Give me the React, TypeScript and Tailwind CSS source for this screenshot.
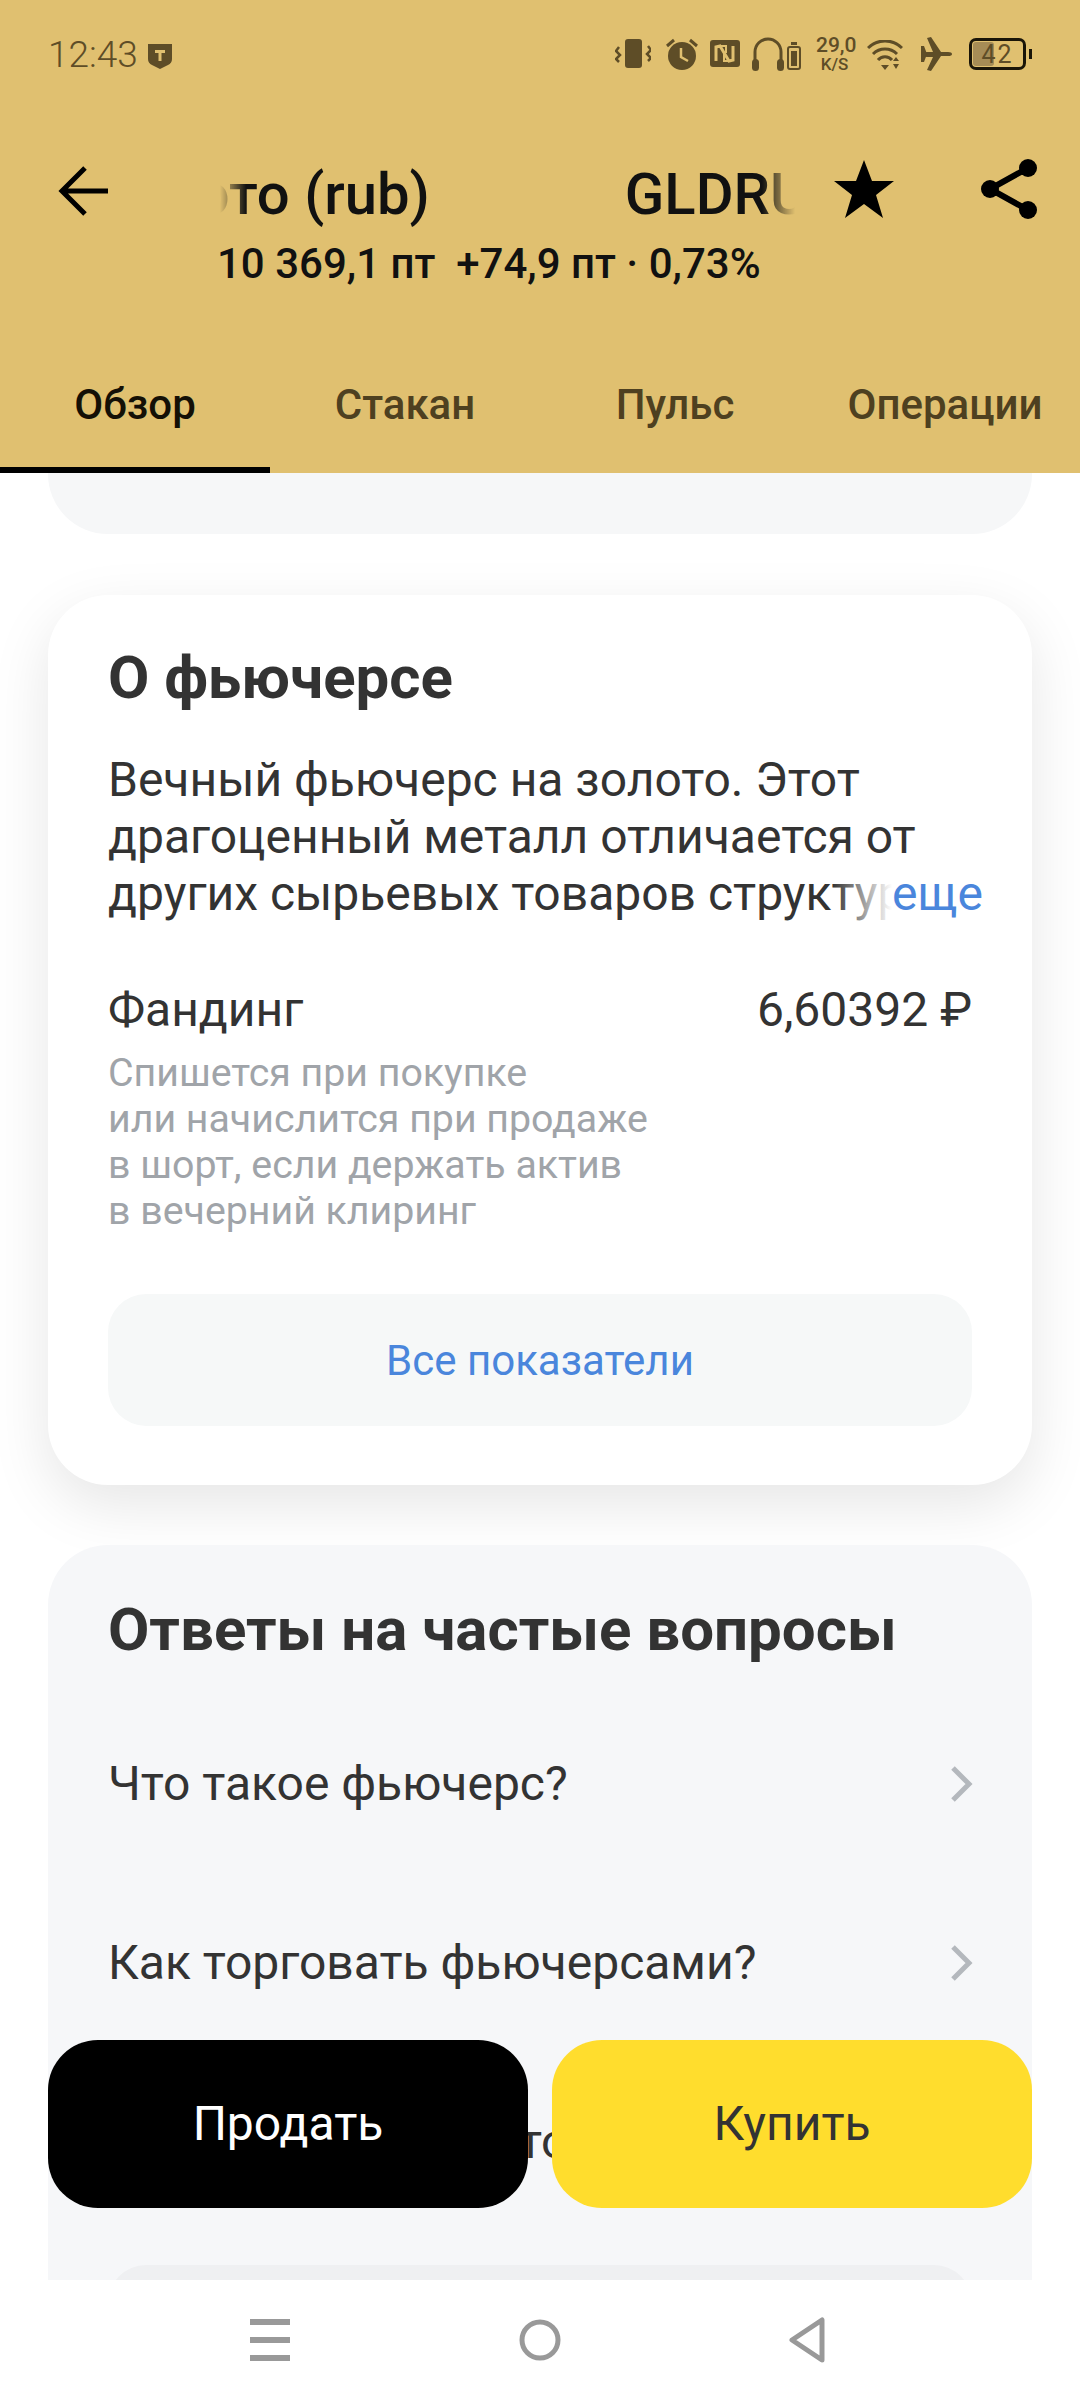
const tabs = ["Обзор", "Стакан", "Пульс", "Операции"];
const faq = ["Что такое фьючерс?", "Как торговать фьючерсами?", "Какие условия по торговле?"];
const funding = ["Спишется при покупке", "или начислится при продаже", "в шорт, если держать актив", "в вечерний клиринг"];

function StatusBar() {
  return (
    <div className="h-[100px] flex items-start pl-[48px] pr-[48px] text-[#5e4d27]">
      <span className="mt-[37px] text-[37px] leading-[36px] font-light">12:43</span>
      <svg className="mt-[43px] ml-[9px]" width="26" height="26" viewBox="0 0 26 26">
        <path d="M1 1h24v15q0 4-4 6l-8 4-8-4q-4-2-4-6z" fill="currentColor" />
        <path d="M8 7h10v3h-3.500v8h-3v-8H8z" fill="#e0c070" />
      </svg>
      <div className="ml-auto mt-[36px] flex items-start">
        <svg width="36" height="30" viewBox="0 0 36 30" className="mt-[3px]">
          <rect x="10" y="0" width="17" height="29" rx="3" fill="currentColor" />
          <path d="M4 8 1 12l4 4-4 4 3 3M33 7l3 4-4 4 4 4-3 3" fill="none" stroke="currentColor" strokeWidth="2.500" />
        </svg>
        <svg width="32" height="32" viewBox="0 0 32 32" className="ml-[15px] mt-[2px]">
          <circle cx="16" cy="18" r="14" fill="currentColor" />
          <path d="M15 10v9l7 4" fill="none" stroke="#e0c070" strokeWidth="2.500" />
          <path d="M1 8l7-6M31 8l-7-6" fill="none" stroke="currentColor" strokeWidth="3" />
        </svg>
        <svg width="30" height="28" viewBox="0 0 30 28" className="ml-[12px] mt-[4px]">
          <rect width="30" height="27" rx="3" fill="currentColor" />
          <path d="M6 21V7l4-1 9 15 4-1V6" fill="none" stroke="#e0c070" strokeWidth="3" />
          <path d="M11 6h5v7M19 21h-5v-7" fill="none" stroke="#e0c070" strokeWidth="2" />
        </svg>
        <svg width="32" height="34" viewBox="0 0 32 34" className="ml-[12px] mt-[1px]">
          <path d="M3 25V15a13 13 0 0 1 26 0v10" fill="none" stroke="currentColor" strokeWidth="3" />
          <rect x="0" y="22" width="7" height="12" rx="3.500" fill="currentColor" />
          <rect x="25" y="22" width="7" height="12" rx="3.500" fill="currentColor" />
        </svg>
        <svg width="14" height="28" viewBox="0 0 14 28" className="ml-[3px] mt-[6px]">
          <rect x="4" y="0" width="6" height="3" fill="currentColor" />
          <rect x="1" y="5" width="12" height="22" rx="2" fill="none" stroke="currentColor" strokeWidth="2" />
          <rect x="4" y="9" width="6" height="15" fill="currentColor" />
        </svg>
        <div className="ml-[15px] w-[37px] text-center font-medium">
          <div className="text-[21px] leading-[18px]">29,0</div>
          <div className="text-[17px] leading-[16px] mt-[2px]">K/S</div>
        </div>
        <svg width="36" height="30" viewBox="0 0 36 30" className="ml-[14px] mt-[4px]">
          <path d="M1 8a24 24 0 0 1 34 0M6 14a17 17 0 0 1 24 0M11 20a9 9 0 0 1 14 0" fill="none" stroke="currentColor" strokeWidth="3" />
          <path d="M14 25h8l-4 5zM26 21h6l-3-4zM26 24h6l-3 5z" fill="currentColor" />
        </svg>
        <svg width="32" height="34" viewBox="0 0 32 34" className="ml-[18px] mt-[1px]">
          <path d="M2 17q0-2 4-2h6L6 1l4-1 10 15h7q4 0 4 2t-4 2h-7L10 34l-4-1 6-13H6q-4 0-4-3z" fill="currentColor" />
          <path d="M0 9h3l3 8-3 8H0z" fill="currentColor" />
        </svg>
        <div className="ml-[16px] mt-[2px] flex items-center">
          <div className="relative w-[57px] h-[32px] rounded-[7px] border-[3px] border-[#1a1508] overflow-hidden">
            <div className="absolute left-[1px] top-[1px] bottom-[1px] w-[21px] rounded-[3px] bg-[#a68c56]" />
            <div className="absolute inset-0 flex items-center justify-center text-[25px] leading-none tracking-[2px]">42</div>
          </div>
          <div className="ml-[3px] w-[3px] h-[10px] bg-[#1a1508]" />
        </div>
      </div>
    </div>
  );
}

function Header() {
  return (
    <div className="bg-[#e0c070] h-[473px] shrink-0 flex flex-col">
      <StatusBar />
      <div className="h-[119px] mt-[56px] flex items-start relative">
        <svg width="52" height="52" viewBox="0 0 52 52" className="ml-[58px] mt-[9px]">
          <path d="M27 3 4 26l23 23M4 26h46" fill="none" stroke="#000" strokeWidth="5" />
        </svg>
        <div className="ml-[102px] w-[583px] overflow-hidden [mask-image:linear-gradient(to_right,transparent_8px,black_34px,black_550px,transparent)]">
          <div className="flex -ml-[116px] mt-[3px] text-[58px] leading-[70px] font-medium text-[#111] whitespace-nowrap">
            <span>Золото (rub)</span>
            <span className="ml-[195px]">GLDRUBF</span>
          </div>
        </div>
        <svg width="60" height="58" viewBox="0 0 60 58" className="absolute left-[834px] top-[4px]">
          <path d="M30 0l8 21h22L42 35l7 23-19-14-19 14 7-23L0 21h22z" fill="#000" />
        </svg>
        <svg width="58" height="62" viewBox="0 0 58 62" className="absolute left-[980px] top-[2px]">
          <path d="M48 10 10 31l38 21" fill="none" stroke="#000" strokeWidth="6" />
          <circle cx="48" cy="10" r="9" fill="#000" />
          <circle cx="10" cy="31" r="9" fill="#000" />
          <circle cx="48" cy="52" r="9" fill="#000" />
        </svg>
      </div>
      <div className="-mt-[36px] pl-[217px] text-[42px] leading-[50px] font-medium text-[#111] whitespace-pre">
        10 369,1 пт  +74,9 пт · 0,73%
      </div>
      <div className="mt-auto grid grid-cols-4 h-[100px]">
        {tabs.map((t, i) => (
          <div
            key={t}
            className={
              i === 0
                ? "flex items-start justify-center pt-[7px] border-b-[6px] border-[#000] text-[42px] leading-[50px] font-medium text-[#141006]"
                : "flex items-start justify-center pt-[7px] text-[42px] leading-[50px] font-medium text-[#4e4020]"
            }
          >
            {t}
          </div>
        ))}
      </div>
    </div>
  );
}

function Chevron() {
  return (
    <svg width="24" height="38" viewBox="0 0 24 38" className="mr-[-1px]">
      <path d="M4 3l16 16L4 35" fill="none" stroke="#b4b8bd" strokeWidth="5" />
    </svg>
  );
}

export default function App() {
  return (
    <div className="relative w-[1080px] h-[2400px] overflow-hidden bg-white flex flex-col text-[#333] [font-family:Roboto,sans-serif]">
      <Header />
      <div className="flex-1 min-h-0 overflow-hidden px-12">
        <div className="h-[61px] bg-[#f6f7f8] rounded-b-[60px]" />
        <div className="mt-[61px] h-[890px] bg-white rounded-[60px] shadow-[0_20px_60px_rgba(0,0,0,0.1)] px-[60px] pt-[48px]">
          <h2 className="text-[60px] leading-[70px] font-bold">О фьючерсе</h2>
          <p className="mt-[38px] text-[48px] leading-[57px]">
            Вечный фьючерс на золото. Этот
            <br />
            драгоценный металл отличается от
          </p>
          <div className="relative h-[57px] -mr-[11px] overflow-hidden whitespace-nowrap text-[48px] leading-[57px]">
            <span>других сырьевых товаров структурекак</span>
            <div className="absolute right-0 top-0 h-full flex bg-white">
              <div className="absolute right-full top-0 h-full w-[60px] bg-gradient-to-r from-transparent to-white" />
              <span className="text-[#4a86dc]">еще</span>
            </div>
          </div>
          <div className="mt-[59px] flex justify-between text-[48px] leading-[57px]">
            <span>Фандинг</span>
            <span>6,60392 ₽</span>
          </div>
          <div className="mt-[12px] text-[39.3px] leading-[46px] text-[#a0a4a9]">
            {funding.map((l) => (
              <div key={l}>{l}</div>
            ))}
          </div>
          <div className="mt-[60px] h-[132px] rounded-[38px] bg-[#f6f8f8] flex items-center justify-center text-[42px] text-[#4a86dc]">
            Все показатели
          </div>
        </div>
        <div className="mt-[60px] h-[900px] bg-[#f6f7f9] rounded-t-[60px] px-[60px] pt-[50px]">
          <h2 className="text-[60px] leading-[70px] font-bold">Ответы на частые вопросы</h2>
          <div className="mt-[80px]">
            {faq.map((q) => (
              <div key={q} className="h-[179px] flex items-start justify-between text-[48px] leading-[78px] whitespace-nowrap">
                <span>{q}</span>
                <span className="h-[78px] flex items-center">
                  <Chevron />
                </span>
              </div>
            ))}
          </div>
          <div className="-mt-[17px] h-[120px] rounded-[38px] bg-[#eff0f2]" />
        </div>
      </div>
      <div className="h-[120px] shrink-0 bg-white flex items-start pl-[135px]">
        <div className="w-[270px] flex justify-center pt-[39px]">
          <svg width="40" height="42" viewBox="0 0 40 42">
            <path d="M0 0h40v6H0zM0 18h40v6H0zM0 36h40v6H0z" fill="#999" />
          </svg>
        </div>
        <div className="w-[270px] flex justify-center pt-[38px]">
          <svg width="42" height="44" viewBox="0 0 42 44">
            <circle cx="21" cy="22" r="18" fill="none" stroke="#999" strokeWidth="5" />
          </svg>
        </div>
        <div className="w-[270px] flex justify-center pt-[36px]">
          <svg width="38" height="48" viewBox="0 0 38 48" className="-ml-[6px]">
            <path d="M34 4v40L4 24z" fill="none" stroke="#999" strokeWidth="5" strokeLinejoin="round" />
          </svg>
        </div>
      </div>
      <div className="absolute left-12 right-12 top-[2040px] flex gap-6">
        <div className="flex-1 h-[168px] rounded-[50px] bg-black text-white flex items-center justify-center text-[48px]">
          Продать
        </div>
        <div className="flex-1 h-[168px] rounded-[50px] bg-[#ffdd2d] text-[#333] flex items-center justify-center text-[48px]">
          Купить
        </div>
      </div>
    </div>
  );
}
